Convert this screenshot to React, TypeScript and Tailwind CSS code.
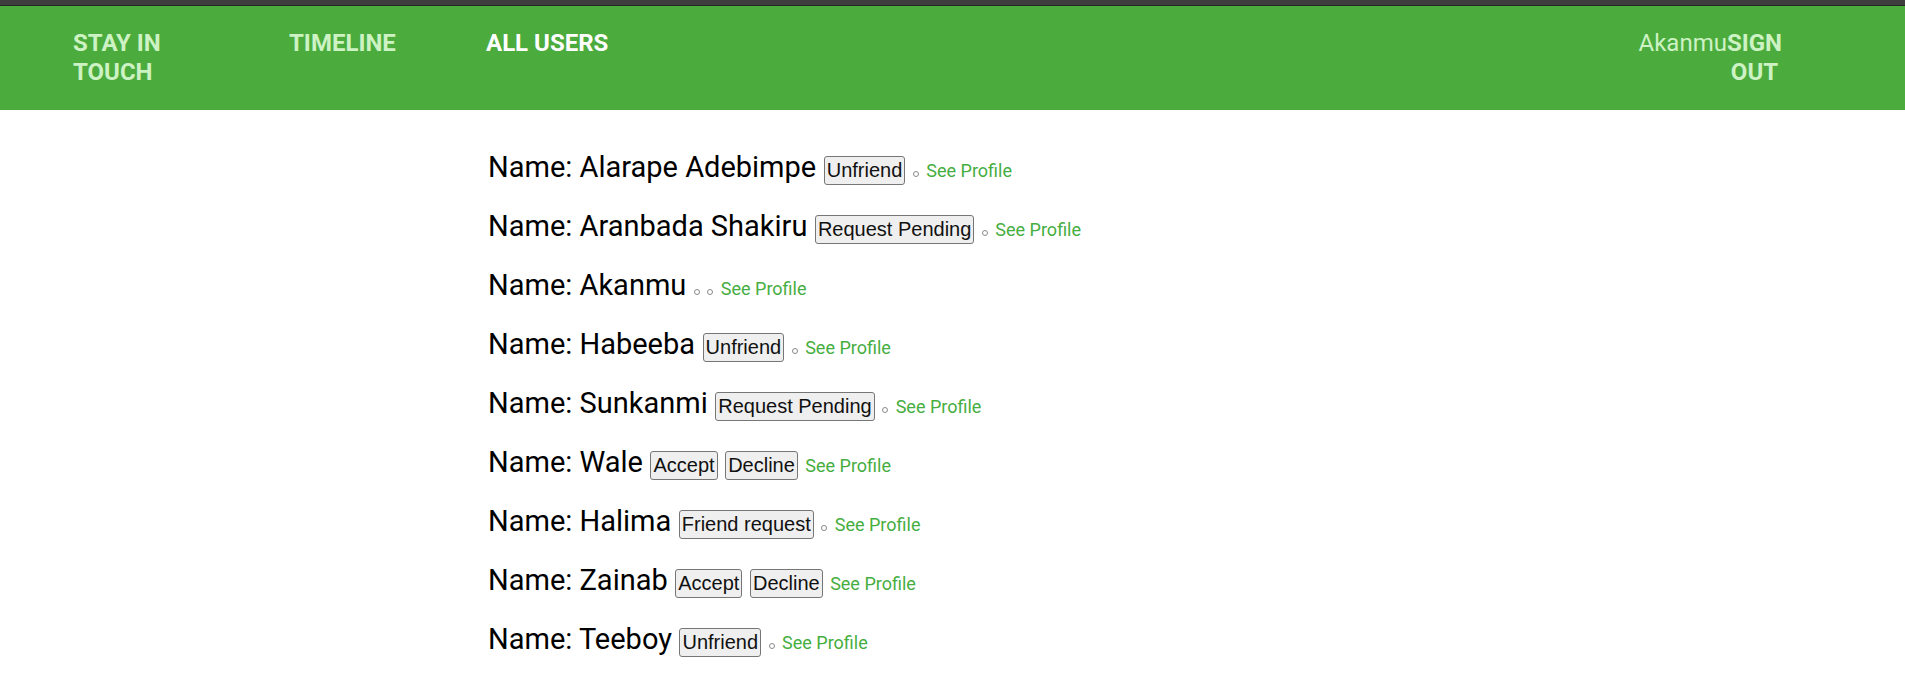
const users = [
  { name: "Alarape Adebimpe", actions: ["Unfriend"], dots: 1 },
  { name: "Aranbada Shakiru", actions: ["Request Pending"], dots: 1 },
  { name: "Akanmu", actions: [], dots: 2 },
  { name: "Habeeba", actions: ["Unfriend"], dots: 1 },
  { name: "Sunkanmi", actions: ["Request Pending"], dots: 1 },
  { name: "Wale", actions: ["Accept", "Decline"], dots: 0 },
  { name: "Halima", actions: ["Friend request"], dots: 1 },
  { name: "Zainab", actions: ["Accept", "Decline"], dots: 0 },
  { name: "Teeboy", actions: ["Unfriend"], dots: 1 },
];

function Dot() {
  return <span className="inline-block w-[6px] h-[6px] mb-[-3px] rounded-full border border-[#8a8a8a]"></span>;
}

export default function App() {
  return (
    <div className="min-h-[681px] bg-white font-['Roboto',sans-serif]">
      <div className="h-[6px] bg-[#3e3e3e] border-b border-[#262626]"></div>
      <nav className="flex items-start justify-between bg-[#4cab3d] pl-[73px] pr-[123px] py-[23px] text-[24px] leading-[29px]">
        <div className="flex items-start">
          <div className="w-[216px] pr-[96px]">
            <a href="#" className="font-bold text-[#cdf2c4]">STAY IN TOUCH</a>
          </div>
          <div className="w-[197px]">
            <a href="#" className="font-bold text-[#cdf2c4]">TIMELINE</a>
          </div>
          <a href="#" className="font-bold text-white">ALL USERS</a>
        </div>
        <div className="flex items-start">
          <span className="text-[#cdf2c4]">Akanmu</span>
          <a href="#" className="w-min text-center font-bold text-[#cdf2c4]">SIGN OUT</a>
        </div>
      </nav>

      <div className="mx-auto w-[929px] pt-[40px] flex flex-col gap-[24px]">
        {users.map((u) => (
          <div key={u.name} className="flex items-baseline gap-[7.5px]">
            <span className="text-[29px] leading-[35px] text-black">Name: {u.name}</span>
            {u.actions.map((a) => (
              <button
                key={a}
                className="px-[2px] py-[2px] rounded-[3px] border border-[#767676] bg-[#efefef] text-[20px] leading-[23px] text-[#111] font-['Liberation_Sans',Arial,sans-serif]"
              >
                {a}
              </button>
            ))}
            {Array.from({ length: u.dots }).map((_, i) => (
              <Dot key={i} />
            ))}
            <a href="#" className="text-[18px] text-[#46ae3f]">See Profile</a>
          </div>
        ))}
      </div>
    </div>
  );
}
